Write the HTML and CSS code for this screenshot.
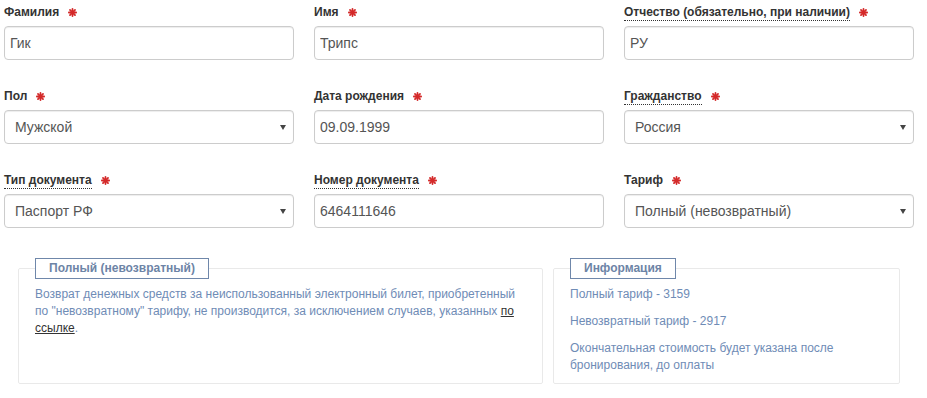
FILE: index.html
```html
<!DOCTYPE html>
<html lang="ru">
<head>
<meta charset="utf-8">
<title>Пассажир</title>
<link rel="stylesheet" href="styles.css">
</head>
<body>
<div class="page">
  <div class="form-grid">
    <div class="field">
      <label class="lbl"><span>Фамилия</span><svg class="req" viewBox="0 0 10 10"><g stroke="#d42a2a" stroke-width="2" stroke-linecap="round"><line x1="5" y1="1" x2="5" y2="9"/><line x1="1" y1="5" x2="9" y2="5"/><line x1="2.2" y1="2.2" x2="7.8" y2="7.8"/><line x1="7.8" y1="2.2" x2="2.2" y2="7.8"/></g></svg></label>
      <input class="ctl" type="text" value="Гик">
    </div>
    <div class="field">
      <label class="lbl"><span>Имя</span><svg class="req" viewBox="0 0 10 10"><g stroke="#d42a2a" stroke-width="2" stroke-linecap="round"><line x1="5" y1="1" x2="5" y2="9"/><line x1="1" y1="5" x2="9" y2="5"/><line x1="2.2" y1="2.2" x2="7.8" y2="7.8"/><line x1="7.8" y1="2.2" x2="2.2" y2="7.8"/></g></svg></label>
      <input class="ctl" type="text" value="Трипс">
    </div>
    <div class="field">
      <label class="lbl"><span class="dotted">Отчество (обязательно, при наличии)</span><svg class="req" viewBox="0 0 10 10"><g stroke="#d42a2a" stroke-width="2" stroke-linecap="round"><line x1="5" y1="1" x2="5" y2="9"/><line x1="1" y1="5" x2="9" y2="5"/><line x1="2.2" y1="2.2" x2="7.8" y2="7.8"/><line x1="7.8" y1="2.2" x2="2.2" y2="7.8"/></g></svg></label>
      <input class="ctl" type="text" value="РУ">
    </div>

    <div class="field">
      <label class="lbl"><span>Пол</span><svg class="req" viewBox="0 0 10 10"><g stroke="#d42a2a" stroke-width="2" stroke-linecap="round"><line x1="5" y1="1" x2="5" y2="9"/><line x1="1" y1="5" x2="9" y2="5"/><line x1="2.2" y1="2.2" x2="7.8" y2="7.8"/><line x1="7.8" y1="2.2" x2="2.2" y2="7.8"/></g></svg></label>
      <div class="sel-wrap"><select class="ctl sel"><option>Мужской</option></select></div>
    </div>
    <div class="field">
      <label class="lbl"><span>Дата рождения</span><svg class="req" viewBox="0 0 10 10"><g stroke="#d42a2a" stroke-width="2" stroke-linecap="round"><line x1="5" y1="1" x2="5" y2="9"/><line x1="1" y1="5" x2="9" y2="5"/><line x1="2.2" y1="2.2" x2="7.8" y2="7.8"/><line x1="7.8" y1="2.2" x2="2.2" y2="7.8"/></g></svg></label>
      <input class="ctl" type="text" value="09.09.1999">
    </div>
    <div class="field">
      <label class="lbl"><span class="dotted">Гражданство</span><svg class="req" viewBox="0 0 10 10"><g stroke="#d42a2a" stroke-width="2" stroke-linecap="round"><line x1="5" y1="1" x2="5" y2="9"/><line x1="1" y1="5" x2="9" y2="5"/><line x1="2.2" y1="2.2" x2="7.8" y2="7.8"/><line x1="7.8" y1="2.2" x2="2.2" y2="7.8"/></g></svg></label>
      <div class="sel-wrap"><select class="ctl sel"><option>Россия</option></select></div>
    </div>

    <div class="field">
      <label class="lbl"><span class="dotted">Тип документа</span><svg class="req" viewBox="0 0 10 10"><g stroke="#d42a2a" stroke-width="2" stroke-linecap="round"><line x1="5" y1="1" x2="5" y2="9"/><line x1="1" y1="5" x2="9" y2="5"/><line x1="2.2" y1="2.2" x2="7.8" y2="7.8"/><line x1="7.8" y1="2.2" x2="2.2" y2="7.8"/></g></svg></label>
      <div class="sel-wrap"><select class="ctl sel"><option>Паспорт РФ</option></select></div>
    </div>
    <div class="field">
      <label class="lbl"><span class="dotted">Номер документа</span><svg class="req" viewBox="0 0 10 10"><g stroke="#d42a2a" stroke-width="2" stroke-linecap="round"><line x1="5" y1="1" x2="5" y2="9"/><line x1="1" y1="5" x2="9" y2="5"/><line x1="2.2" y1="2.2" x2="7.8" y2="7.8"/><line x1="7.8" y1="2.2" x2="2.2" y2="7.8"/></g></svg></label>
      <input class="ctl" type="text" value="6464111646">
    </div>
    <div class="field">
      <label class="lbl"><span>Тариф</span><svg class="req" viewBox="0 0 10 10"><g stroke="#d42a2a" stroke-width="2" stroke-linecap="round"><line x1="5" y1="1" x2="5" y2="9"/><line x1="1" y1="5" x2="9" y2="5"/><line x1="2.2" y1="2.2" x2="7.8" y2="7.8"/><line x1="7.8" y1="2.2" x2="2.2" y2="7.8"/></g></svg></label>
      <div class="sel-wrap"><select class="ctl sel"><option>Полный (невозвратный)</option></select></div>
    </div>
  </div>

  <div class="info-row">
    <fieldset class="box box-tariff">
      <legend>Полный (невозвратный)</legend>
      <p>Возврат денежных средств за неиспользованный электронный билет, приобретенный по "невозвратному" тарифу, не производится, за исключением случаев, указанных <a href="#">по ссылке</a>.</p>
    </fieldset>
    <fieldset class="box box-info">
      <legend>Информация</legend>
      <p>Полный тариф - 3159</p>
      <p>Невозвратный тариф - 2917</p>
      <p>Окончательная стоимость будет указана после бронирования, до оплаты</p>
    </fieldset>
  </div>
</div>
</body>
</html>
```

FILE: styles.css
```css
* { box-sizing: border-box; }

body {
  margin: 0;
  background: #fff;
  font-family: "Liberation Sans", Arial, sans-serif;
  color: #333;
}

.page {
  padding: 3px 13px 0 4px;
}

.form-grid {
  display: grid;
  grid-template-columns: repeat(3, 290px);
  column-gap: 20px;
  row-gap: 27px;
}

.field {
  display: flex;
  flex-direction: column;
}

.lbl {
  display: block;
  height: 18px;
  margin-bottom: 5px;
  font-size: 12px;
  font-weight: bold;
  line-height: 18px;
  color: #333;
  white-space: nowrap;
}

.dotted {
  border-bottom: 1px dotted #333;
  padding-bottom: 1px;
}

.req {
  width: 9px;
  height: 9px;
  margin-left: 9px;
  vertical-align: -1px;
}

.ctl {
  display: block;
  width: 100%;
  height: 34px;
  margin: 0;
  padding: 0 5px;
  border: 1px solid #ccc;
  border-radius: 4px;
  background: #fff;
  box-shadow: inset 0 1px 1px rgba(0, 0, 0, 0.075);
  font-family: "Liberation Sans", Arial, sans-serif;
  font-size: 14px;
  color: #555;
  outline: none;
}

.sel-wrap {
  position: relative;
}

.sel {
  -webkit-appearance: none;
  appearance: none;
  padding: 0 20px 0 10px;
}

.sel-wrap::after {
  content: "";
  position: absolute;
  right: 8px;
  top: 15px;
  width: 0;
  height: 0;
  border-left: 3px solid transparent;
  border-right: 3px solid transparent;
  border-top: 5px solid #444;
  pointer-events: none;
}

.info-row {
  display: flex;
  gap: 10px;
  margin-top: 30px;
  padding-left: 14px;
}

.box {
  margin: 0;
  min-width: 0;
  padding: 0 16px 9px;
  border: 1px solid #e9e9e9;
  border-radius: 2px;
  color: #6f8cb6;
  font-size: 12px;
  line-height: 17px;
}

.box-tariff { width: 525px; }
.box-info { width: 347px; }

.box legend {
  padding: 0 13px;
  border: 1px solid #6f87aa;
  font-size: 12px;
  font-weight: bold;
  line-height: 19px;
  color: #6d84a6;
}

.box p {
  margin: 10px 0 0;
}

.box p:first-of-type {
  margin-top: 7px;
}

.box a {
  color: #333;
  text-decoration: underline;
}
```
